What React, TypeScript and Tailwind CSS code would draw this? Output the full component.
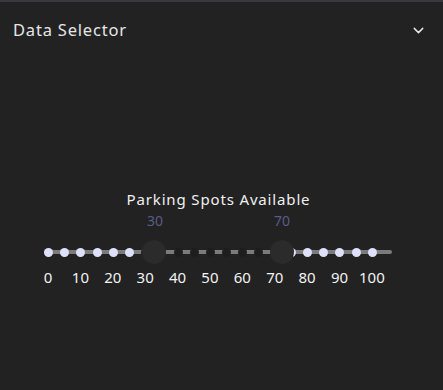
import { ChevronDown } from "lucide-react";

const low = 30;
const high = 70;

export default function App() {
  const dots = Array.from({ length: 21 }, (_, i) => i * 5);
  const ticks = Array.from({ length: 11 }, (_, i) => i * 10);

  return (
    <div
      className="w-[443px] h-[390px] bg-[#222222] border-t-[2px] border-[#3a393e] text-white"
      style={{ fontFamily: '"Noto Sans", "Open Sans", sans-serif' }}
    >
      {/* Header */}
      <div className="h-[56px] flex items-center justify-between pl-[13px] pr-[16px]">
        <span className="text-[16.5px] tracking-[0.8px] text-[#e6e6e6]">Data Selector</span>
        <ChevronDown className="w-[17px] h-[17px] text-[#e6e6e6]" strokeWidth={2} />
      </div>

      {/* Slider */}
      <div className="mt-[131px] flex flex-col">
        <div className="text-center text-[15px] leading-[20px] tracking-[0.85px] text-[#f0f0f0] pr-[6px]">
          Parking Spots Available
        </div>

        {/* thumb values */}
        <div className="flex mt-[2px] h-[20px] text-[14px] leading-[20px] text-[#585d88]">
          <span className="ml-[140px] w-[30px] text-center">{low}</span>
          <span className="ml-[97px] w-[30px] text-center">{high}</span>
        </div>

        {/* track */}
        <div className="relative ml-[44px] w-[348px] h-[24px] mt-[9px] flex items-center">
          <div className="absolute inset-x-0 top-[10px] h-[4px] rounded-full bg-[#7b7b7b]" />
          <div className="relative w-[333px] flex justify-between">
            {dots.map((v) => (
              <div
                key={v}
                className={
                  "w-[9px] h-[9px] rounded-full " +
                  (v >= low && v <= high ? "bg-[#1e1e1e]" : "bg-[#dfe1fa]")
                }
              />
            ))}
          </div>
          <div className="absolute left-[98px] top-0 w-[24px] h-[24px] rounded-full bg-[#2b2b2b]" />
          <div className="absolute left-[226px] top-0 w-[24px] h-[24px] rounded-full bg-[#2b2b2b]" />
        </div>

        {/* tick labels */}
        <div className="flex ml-[31.8px] mt-[3px] h-[20px] text-[15px] leading-[20px] text-[#f2f2f2]">
          {ticks.map((v) => (
            <span key={v} className="w-[32.4px] shrink-0 text-center">
              {v}
            </span>
          ))}
        </div>
      </div>
    </div>
  );
}
